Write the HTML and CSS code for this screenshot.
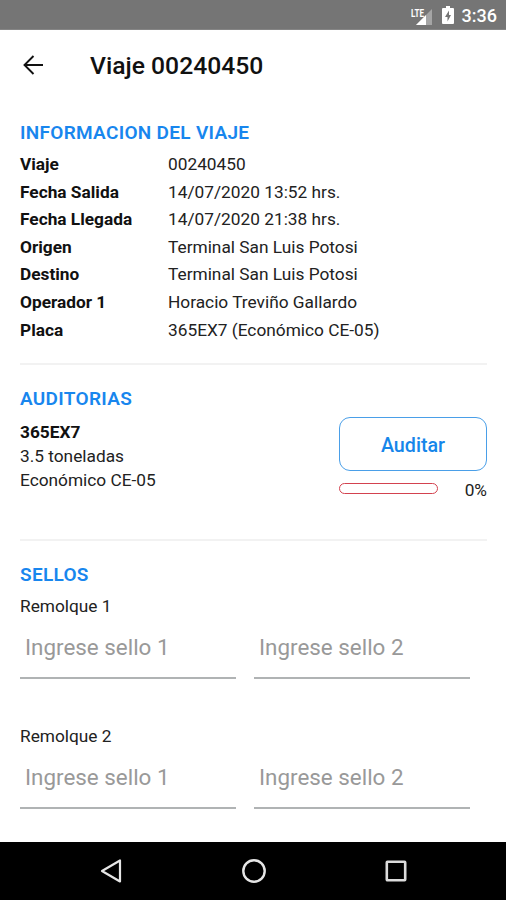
FILE: index.html
```html
<!DOCTYPE html>
<html lang="es">
<head>
  <meta charset="UTF-8" />
  <title>Viaje 00240450</title>
  <link rel="stylesheet" href="styles.css">
</head>
<body>
  <div class="screen">
    <div class="status-bar">
      <svg class="signal" width="22" height="20" viewBox="0 0 22 20">
        <path d="M21 2V18H5Z" fill="#a5a5a5" />
        <path d="M15 8V18H5Z" fill="#fff" />
        <text x="0" y="9.5" class="lte" textLength="13" lengthAdjust="spacingAndGlyphs">LTE</text>
      </svg>
      <svg class="battery" width="12" height="18" viewBox="0 0 12 18">
        <path d="M4 0H8V2H11Q12 2 12 3V17Q12 18 11 18H1Q0 18 0 17V3Q0 2 1 2H4Z" fill="#fff" />
        <path d="M7 4.5L3 11H5.5V15.5L9 9H7Z" fill="#757575" />
      </svg>
      <span class="clock">3:36</span>
    </div>

    <header class="header">
      <svg class="back" width="20" height="20" viewBox="0 0 20 20">
        <path d="M20 10H1.5M10.5 1L1.5 10L10.5 19" fill="none" stroke="#111" stroke-width="1.9" />
      </svg>
      <h1>Viaje 00240450</h1>
    </header>

    <main class="content">
      <section class="trip">
        <h2>INFORMACION DEL VIAJE</h2>
        <dl class="info-list">
          <dt>Viaje</dt><dd>00240450</dd>
          <dt>Fecha Salida</dt><dd>14/07/2020 13:52 hrs.</dd>
          <dt>Fecha Llegada</dt><dd>14/07/2020 21:38 hrs.</dd>
          <dt>Origen</dt><dd>Terminal San Luis Potosi</dd>
          <dt>Destino</dt><dd>Terminal San Luis Potosi</dd>
          <dt>Operador 1</dt><dd>Horacio Treviño Gallardo</dd>
          <dt>Placa</dt><dd>365EX7 (Económico CE-05)</dd>
        </dl>
      </section>

      <section class="audits">
        <h2>AUDITORIAS</h2>
        <div class="audit">
          <div class="vehicle">
            <strong>365EX7</strong>
            <span>3.5 toneladas</span>
            <span>Económico CE-05</span>
          </div>
          <div class="audit-action">
            <button type="button">Auditar</button>
            <div class="progress">
              <div class="progress-bar"></div>
              <span>0%</span>
            </div>
          </div>
        </div>
      </section>

      <section class="seals">
        <h2>SELLOS</h2>
        <div class="trailer">
          <p>Remolque 1</p>
          <div class="fields">
            <input type="text" placeholder="Ingrese sello 1" />
            <input type="text" placeholder="Ingrese sello 2" />
          </div>
        </div>
        <div class="trailer">
          <p>Remolque 2</p>
          <div class="fields">
            <input type="text" placeholder="Ingrese sello 1" />
            <input type="text" placeholder="Ingrese sello 2" />
          </div>
        </div>
      </section>
    </main>

    <nav class="nav-bar">
      <svg width="24" height="26" viewBox="0 0 24 26">
        <path d="M21 2.5V23.5L3 13Z" fill="none" stroke="#e6e6e6" stroke-width="2.2" stroke-linejoin="round" />
      </svg>
      <svg width="26" height="26" viewBox="0 0 26 26">
        <circle cx="13" cy="13" r="10.7" fill="none" stroke="#e6e6e6" stroke-width="2.4" />
      </svg>
      <svg width="24" height="26" viewBox="0 0 24 26">
        <rect x="2.8" y="3.8" width="18.4" height="18.4" rx="0.6" fill="none" stroke="#dcdcdc" stroke-width="2.6" />
      </svg>
    </nav>
  </div>
</body>
</html>
```

FILE: styles.css
```css
* {
  box-sizing: border-box;
}
body {
  margin: 0;
  font-family: Roboto, sans-serif;
  font-size: 17.3px;
  color: #222;
  background: #fff;
}
h1, h2, p, dl, dd {
  margin: 0;
}
.screen {
  display: flex;
  flex-direction: column;
  width: 506px;
  height: 900px;
  overflow: hidden;
}
.status-bar {
  display: flex;
  flex: none;
  align-items: center;
  justify-content: flex-end;
  height: 30px;
  padding-right: 9px;
  background: #757575;
  border-bottom: 1px solid #858585;
  color: #fff;
}
.lte {
  font-size: 11.5px;
  font-weight: bold;
  fill: #fff;
}
.signal {
  margin: 4px 9px 0 0;
}
.battery {
  margin-right: 8px;
}
.clock {
  font-size: 18px;
  font-weight: 500;
  line-height: 31px;
  margin-top: 2px;
}
.header {
  display: flex;
  flex: none;
  align-items: center;
  height: 70px;
  padding: 0 23px;
}
.back {
  margin-right: 47px;
}
h1 {
  font-size: 24.7px;
  font-weight: 500;
  color: #111;
}
.content {
  flex: 1;
  min-height: 0;
  padding: 21px 19px 0 20px;
}
h2 {
  font-size: 19px;
  font-weight: 600;
  letter-spacing: 0.3px;
  line-height: 24px;
  color: #1886ee;
}
.info-list {
  display: grid;
  grid-template-columns: 148px 1fr;
  grid-auto-rows: 27.6px;
  line-height: 27.6px;
  margin-top: 6px;
}
dt, strong {
  font-weight: 700;
  color: #111;
}
.trip {
  height: 244px;
  border-bottom: 2px solid #f2f2f2;
}
.audits {
  height: 176px;
  padding-top: 22px;
  border-bottom: 2px solid #f2f2f2;
}
.audit {
  display: flex;
  justify-content: space-between;
  margin-top: 6px;
}
.vehicle {
  display: flex;
  flex-direction: column;
  margin-top: 3px;
  line-height: 24px;
}
.audit-action {
  width: 148px;
}
button {
  display: block;
  width: 100%;
  height: 54px;
  padding-top: 3px;
  border: 1.5px solid #4a9fe8;
  border-radius: 11px;
  background: #fff;
  color: #1686ea;
  font-family: inherit;
  font-size: 19.7px;
  font-weight: 500;
}
.progress {
  display: flex;
  align-items: center;
  justify-content: space-between;
  height: 35px;
}
.progress-bar {
  width: 99px;
  height: 11px;
  border: 1px solid #d3424f;
  border-radius: 6px;
}
.progress span {
  padding-top: 2px;
}
.seals {
  padding-top: 22px;
}
.trailer {
  height: 130px;
  padding-top: 7px;
}
.trailer p {
  line-height: 24px;
}
.fields {
  display: grid;
  grid-template-columns: 216px 216px;
  gap: 18px;
}
input {
  width: 100%;
  height: 61px;
  padding: 0 5px 1px;
  border: none;
  border-bottom: 2px solid #b0b3b4;
  background: none;
  font-family: inherit;
  font-size: 22.4px;
  color: #222;
  outline: none;
}
input::placeholder {
  color: #999;
}
.nav-bar {
  display: flex;
  flex: none;
  align-items: center;
  justify-content: space-between;
  height: 58px;
  padding: 0 98px 0 99px;
  background: #000;
}
```
